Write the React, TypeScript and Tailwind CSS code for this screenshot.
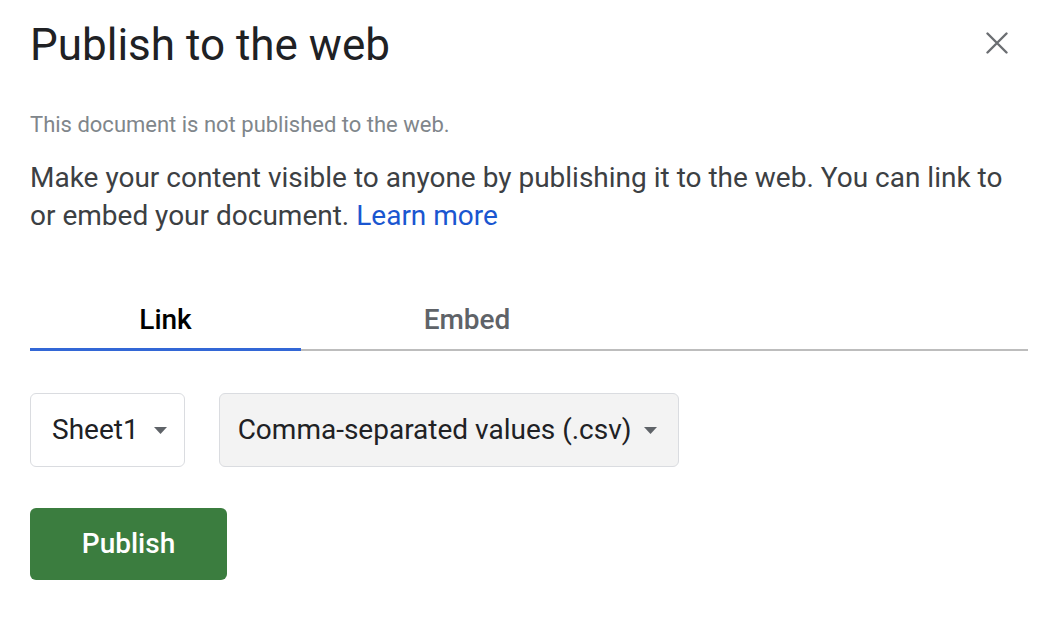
function Caret() {
  return (
    <svg width="13" height="7" viewBox="0 0 13 7" className="shrink-0">
      <path d="M0 0h13L6.5 7z" fill="#5f6368" />
    </svg>
  );
}

export default function App() {
  return (
    <div className="w-[1058px] h-[622px] bg-white px-[30px] pt-[19px] font-['Roboto',sans-serif] text-[#202124]">
      {/* Header */}
      <div className="flex items-center justify-between">
        <h1 className="text-[44px] leading-[52px] font-normal text-[#202124]">Publish to the web</h1>
        <button className="mr-[20px] -mt-[4px] text-[#5f6368]">
          <svg width="22" height="22" viewBox="0 0 22 22">
            <path d="M1.5 1.5L20.5 20.5M20.5 1.5L1.5 20.5" stroke="#6b6e72" strokeWidth="2.4" strokeLinecap="round" />
          </svg>
        </button>
      </div>

      <p className="mt-[40px] text-[22px] leading-[28px] text-[#80868b]">This document is not published to the web.</p>

      <p className="mt-[20px] text-[28px] leading-[38px] text-[#3c4043]">
        Make your content visible to anyone by publishing it to the web. You can link to or embed your document.{" "}
        <a className="text-[#1a56d0]">Learn more</a>
      </p>

      {/* Tabs */}
      <div className="mt-[67px] flex border-b-2 border-[#bdbdbd]">
        <div className="w-[271px] -mb-[2px] border-b-[3px] border-[#3367d6] pb-[10px] text-center text-[28px] leading-[36px] font-medium text-black">
          Link
        </div>
        <div className="w-[332px] pb-[10px] text-center text-[28px] leading-[36px] font-medium text-[#5f6368]">
          Embed
        </div>
      </div>

      {/* Selects */}
      <div className="mt-[42px] flex gap-[34px]">
        <div className="h-[74px] flex items-center gap-[15px] pl-[21px] pr-[17px] border border-[#dadce0] rounded-[6px] bg-white">
          <span className="text-[28px] text-[#202124]">Sheet1</span>
          <Caret />
        </div>
        <div className="h-[74px] flex items-center gap-[12px] pl-[18px] pr-[21px] border border-[#dadce0] rounded-[6px] bg-[#f3f3f3]">
          <span className="text-[28px] text-[#202124]">Comma-separated values (.csv)</span>
          <Caret />
        </div>
      </div>

      <button className="mt-[41px] w-[197px] h-[72px] rounded-[6px] bg-[#3b7d3f] text-white text-[28px] font-medium">
        Publish
      </button>
    </div>
  );
}
